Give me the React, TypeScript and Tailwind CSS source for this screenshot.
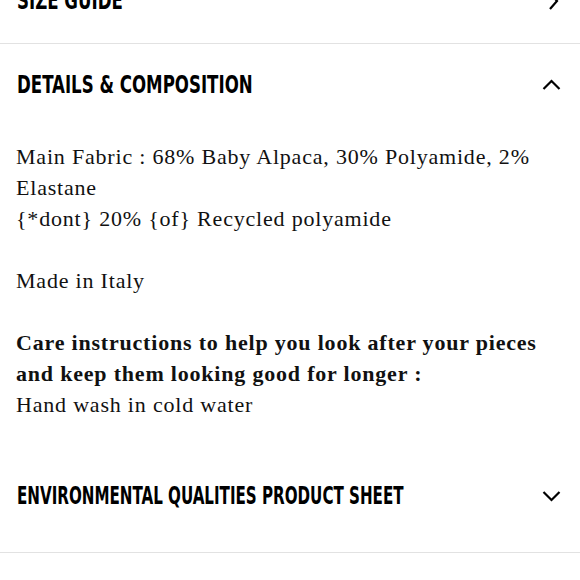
import React from "react";

function Chevron({ dir }: { dir: "up" | "down" | "right" }) {
  if (dir === "right") {
    return (
      <svg width="12" height="18" viewBox="0 0 12 18" fill="none" className="shrink-0">
        <polyline points="3,1 10,9 3,17" stroke="#000" strokeWidth="2.2" />
      </svg>
    );
  }
  return (
    <svg width="19" height="11" viewBox="0 0 19 11" fill="none" className="shrink-0">
      {dir === "up" ? (
        <polyline points="1.5,10 9.5,2 17.5,10" stroke="#000" strokeWidth="2.2" />
      ) : (
        <polyline points="1.5,1 9.5,9 17.5,1" stroke="#000" strokeWidth="2.2" />
      )}
    </svg>
  );
}

// condensed display face: DejaVu condensed, squeezed a bit more to get the narrow look
const heading =
  "min-w-0 origin-left font-['DejaVu_Sans',sans-serif] font-stretch-condensed font-bold uppercase text-[24px] text-black whitespace-nowrap";

export default function App() {
  return (
    <div className="w-[580px] h-[580px] overflow-hidden bg-white">
      {/* size guide, scrolled partly out of view */}
      <div className="-mt-[42px] flex h-[86px] items-center justify-between border-b border-[#e2e2e2] pl-[17px] pr-[21px]">
        <span className={`${heading} scale-x-[0.77]`}>Size Guide</span>
        <Chevron dir="right" />
      </div>

      {/* details & composition */}
      <div className="flex h-[81px] items-center justify-between pl-[17px] pr-[19px]">
        <span className={`${heading} scale-x-[0.77]`}>Details &amp; Composition</span>
        <Chevron dir="up" />
      </div>
      <div className="pt-[16px] pb-[36px] pl-[16px] pr-[16px] font-['Liberation_Serif',serif] text-[22px] tracking-[0.8px] leading-[31px] text-[#111]">
        <p>
          Main Fabric : 68% Baby Alpaca, 30% Polyamide, 2% Elastane
          <br />
          {"{*dont} 20% {of} Recycled polyamide"}
        </p>
        <br />
        <p>Made in Italy</p>
        <br />
        <p>
          <b>Care instructions to help you look after your pieces and keep them looking good for longer :</b>
          <br />
          Hand wash in cold water
        </p>
      </div>

      {/* environmental */}
      <div className="border-b border-[#e2e2e2] pb-[16px]">
        <div className="flex h-[80px] items-center justify-between pl-[17px] pr-[19px]">
          <span className={`${heading} scale-x-[0.7]`}>Environmental Qualities Product Sheet</span>
          <Chevron dir="down" />
        </div>
      </div>
    </div>
  );
}
